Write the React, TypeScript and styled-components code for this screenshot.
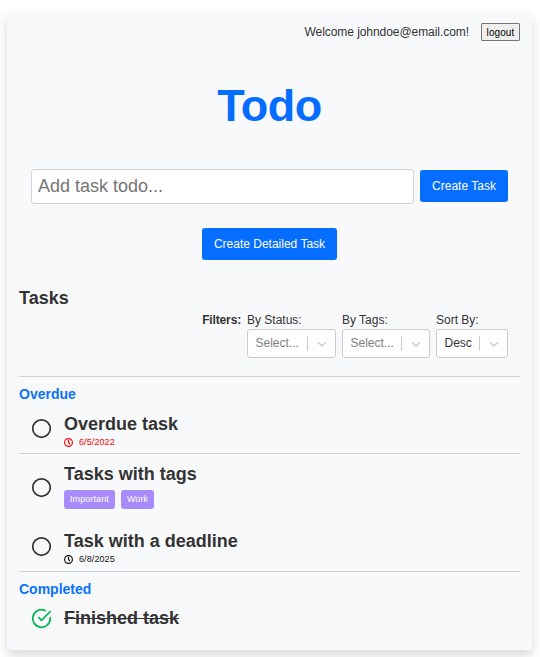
import React from 'react';
import styled, { createGlobalStyle } from 'styled-components';

const GlobalStyle = createGlobalStyle`
  *, *::before, *::after { box-sizing: border-box; }
  html { background: #fff; overflow: hidden; }
  body {
    margin: 0;
    color: #333;
    font-family: "Liberation Sans", Helvetica, Arial, sans-serif;
    font-size: 12px;
    line-height: 18px;
  }
  button, input { font-family: inherit; }
  h1, h2, h3, h4, p { margin: 0; }
`;

const Card = styled.main`
  width: 525px;
  height: 638px;
  margin: 12px 8px 7px 7px;
  padding: 11px 12px 0;
  background: #f8f9fb;
  border-radius: 4px;
  box-shadow: 0 6px 12px rgba(0, 0, 0, 0.15);
`;

const TopBar = styled.header`
  display: flex;
  justify-content: flex-end;
  align-items: center;
  gap: 12px;
  height: 18px;
`;

const Welcome = styled.span`
  width: 164.5px;
  letter-spacing: -0.06px;
  white-space: nowrap;
`;

const LogoutButton = styled.button`
  width: 39px;
  height: 18px;
  padding: 2px 0 0;
  border: 1px solid #767676;
  border-radius: 1px;
  background: #efefef;
  color: #000;
  font-size: 10px;
  letter-spacing: 0.1px;
  line-height: 14px;
`;

const Title = styled.h1`
  margin-top: 37px;
  height: 56px;
  color: #056dff;
  font-size: 45px;
  letter-spacing: -0.5px;
  line-height: 56px;
  text-align: center;
`;

const CreateForm = styled.form`
  display: flex;
  align-items: flex-start;
  gap: 6px;
  margin-top: 35px;
  padding: 0 12px;
`;

const TaskInput = styled.input`
  flex: 1;
  min-width: 0;
  height: 35px;
  padding: 0 6px;
  border: 1px solid #ced4da;
  border-radius: 3px;
  background: #fff;
  font-size: 18px;
  &::placeholder { color: #757575; }
`;

const PrimaryButton = styled.button<{ $width: number }>`
  width: ${(p) => p.$width}px;
  height: 32px;
  padding: 0;
  border: 0;
  border-radius: 3px;
  background: #056dff;
  color: #fff;
  font-size: 12px;
  white-space: nowrap;
`;

const SubmitButton = styled(PrimaryButton)`
  margin-top: 1px;
`;

const DetailedRow = styled.div`
  display: flex;
  justify-content: center;
  margin-top: 24px;
`;

const TasksHeading = styled.h2`
  margin-top: 27px;
  height: 23px;
  font-size: 18px;
  line-height: 23px;
`;

const Filters = styled.section`
  display: flex;
  justify-content: flex-end;
  gap: 6px;
  margin-top: 1px;
  padding: 0 12px 18px 0;
  border-bottom: 1px solid #ced4da;
`;

const FilterTitle = styled.strong`
  letter-spacing: -0.15px;
  line-height: 18px;
`;

const Filter = styled.div<{ $width: number }>`
  width: ${(p) => p.$width}px;
  white-space: nowrap;
`;

const Select = styled.div<{ $filled?: boolean }>`
  display: flex;
  align-items: center;
  height: 29px;
  border: 1px solid #ccc;
  border-radius: 3px;
  background: #fff;
  color: ${(p) => (p.$filled ? '#333' : '#808080')};
`;

const SelectValue = styled.span`
  flex: 1;
  padding-left: 7.5px;
  line-height: 27px;
`;

const SelectArrow = styled.span`
  display: flex;
  align-items: center;
  justify-content: center;
  width: 28px;
  height: 15px;
  border-left: 1px solid #ccc;
`;

const GroupTitle = styled.h4`
  margin-top: 8px;
  height: 18px;
  color: #0a73fa;
  font-size: 14px;
  line-height: 18px;
`;

const Group = styled.section<{ $bottom?: number }>`
  padding-bottom: ${(p) => p.$bottom ?? 0}px;
  border-bottom: 1px solid #ced4da;
  &:last-child { border-bottom: 0; }
`;

const TaskRow = styled.article<{ $height: number; $top?: number }>`
  display: flex;
  align-items: center;
  gap: 12px;
  height: ${(p) => p.$height}px;
  margin-top: ${(p) => p.$top ?? 0}px;
  padding-left: 12px;
`;

const TaskBody = styled.div<{ $above?: number; $below?: number }>`
  padding-top: ${(p) => p.$above ?? 0}px;
  padding-bottom: ${(p) => p.$below ?? 0}px;
`;

const StatusIcon = styled.svg`
  flex: none;
  width: 21px;
  height: 21px;
`;

const TaskName = styled.h3<{ $done?: boolean }>`
  height: 23px;
  font-size: 18px;
  line-height: 23px;
  text-decoration: ${(p) => (p.$done ? 'line-through' : 'none')};
`;

const DueDate = styled.p<{ $late?: boolean }>`
  display: flex;
  align-items: center;
  gap: 6px;
  height: 13px;
  color: ${(p) => (p.$late ? '#f00' : '#111')};
  font-size: 9px;
  letter-spacing: 0.1px;
  line-height: 13px;
`;

const Tags = styled.div`
  display: flex;
  gap: 6px;
  margin-top: 4px;
`;

const Tag = styled.span`
  height: 19px;
  padding: 0 6px;
  border-radius: 3px;
  background: #a78bfa;
  color: #fff;
  font-size: 9px;
  letter-spacing: 0.1px;
  line-height: 19px;
`;

const Chevron = () => (
  <svg width="14" height="14" viewBox="0 0 20 20" fill="#ccc">
    <path d="M4.516 7.548c0.436-0.446 1.043-0.481 1.576 0l3.908 3.747 3.908-3.747c0.533-0.481 1.141-0.446 1.574 0 0.436 0.445 0.408 1.197 0 1.615-0.406 0.418-4.695 4.502-4.695 4.502-0.217 0.223-0.502 0.335-0.787 0.335s-0.57-0.112-0.789-0.335c0 0-4.287-4.084-4.695-4.502s-0.436-1.17 0-1.615z" />
  </svg>
);

const OpenIcon = () => (
  <StatusIcon viewBox="0 0 24 24" fill="none" stroke="#333" strokeWidth="2">
    <circle cx="12" cy="12" r="10" />
  </StatusIcon>
);

const DoneIcon = () => (
  <StatusIcon viewBox="0 0 24 24" fill="none" stroke="#09b450" strokeWidth="2" strokeLinecap="round" strokeLinejoin="round">
    <path d="M22 11.08V12a10 10 0 1 1-5.93-9.14" />
    <path d="M22 4 12 14.01l-3-3" />
  </StatusIcon>
);

const ClockIcon = () => (
  <svg width="9" height="9" viewBox="0 0 18 18" fill="none" stroke="currentColor" strokeWidth="2.3">
    <circle cx="9" cy="9" r="7.8" />
    <path d="M9 4v5l3 3" />
  </svg>
);

type SelectFieldProps = { label: string; value: string; width: number; filled?: boolean };

const SelectField = ({ label, value, width, filled }: SelectFieldProps) => (
  <Filter $width={width}>
    {label}
    <Select $filled={filled}>
      <SelectValue>{value}</SelectValue>
      <SelectArrow><Chevron /></SelectArrow>
    </Select>
  </Filter>
);

export default function App() {
  return (
    <>
      <GlobalStyle />
      <Card>
        <TopBar>
          <Welcome>Welcome johndoe@email.com!</Welcome>
          <LogoutButton>logout</LogoutButton>
        </TopBar>
        <Title>Todo</Title>
        <CreateForm onSubmit={(e) => e.preventDefault()}>
          <TaskInput placeholder="Add task todo..." />
          <SubmitButton $width={88}>Create Task</SubmitButton>
        </CreateForm>
        <DetailedRow>
          <PrimaryButton $width={135}>Create Detailed Task</PrimaryButton>
        </DetailedRow>
        <TasksHeading>Tasks</TasksHeading>
        <Filters>
          <FilterTitle>Filters:</FilterTitle>
          <SelectField label="By Status:" value="Select..." width={89} />
          <SelectField label="By Tags:" value="Select..." width={88} />
          <SelectField label="Sort By:" value="Desc" width={72} filled />
        </Filters>
        <Group>
          <GroupTitle>Overdue</GroupTitle>
          <TaskRow $height={50}>
            <OpenIcon />
            <TaskBody $above={6}>
              <TaskName>Overdue task</TaskName>
              <DueDate $late><ClockIcon />6/5/2022</DueDate>
            </TaskBody>
          </TaskRow>
        </Group>
        <Group $bottom={6}>
          <TaskRow $height={49} $top={9}>
            <OpenIcon />
            <TaskBody $below={3}>
              <TaskName>Tasks with tags</TaskName>
              <Tags><Tag>Important</Tag><Tag>Work</Tag></Tags>
            </TaskBody>
          </TaskRow>
          <TaskRow $height={37} $top={16}>
            <OpenIcon />
            <TaskBody $above={3}>
              <TaskName>Task with a deadline</TaskName>
              <DueDate><ClockIcon />6/8/2025</DueDate>
            </TaskBody>
          </TaskRow>
        </Group>
        <Group>
          <GroupTitle>Completed</GroupTitle>
          <TaskRow $height={23} $top={9}>
            <DoneIcon />
            <TaskName $done>Finished task</TaskName>
          </TaskRow>
        </Group>
      </Card>
    </>
  );
}
